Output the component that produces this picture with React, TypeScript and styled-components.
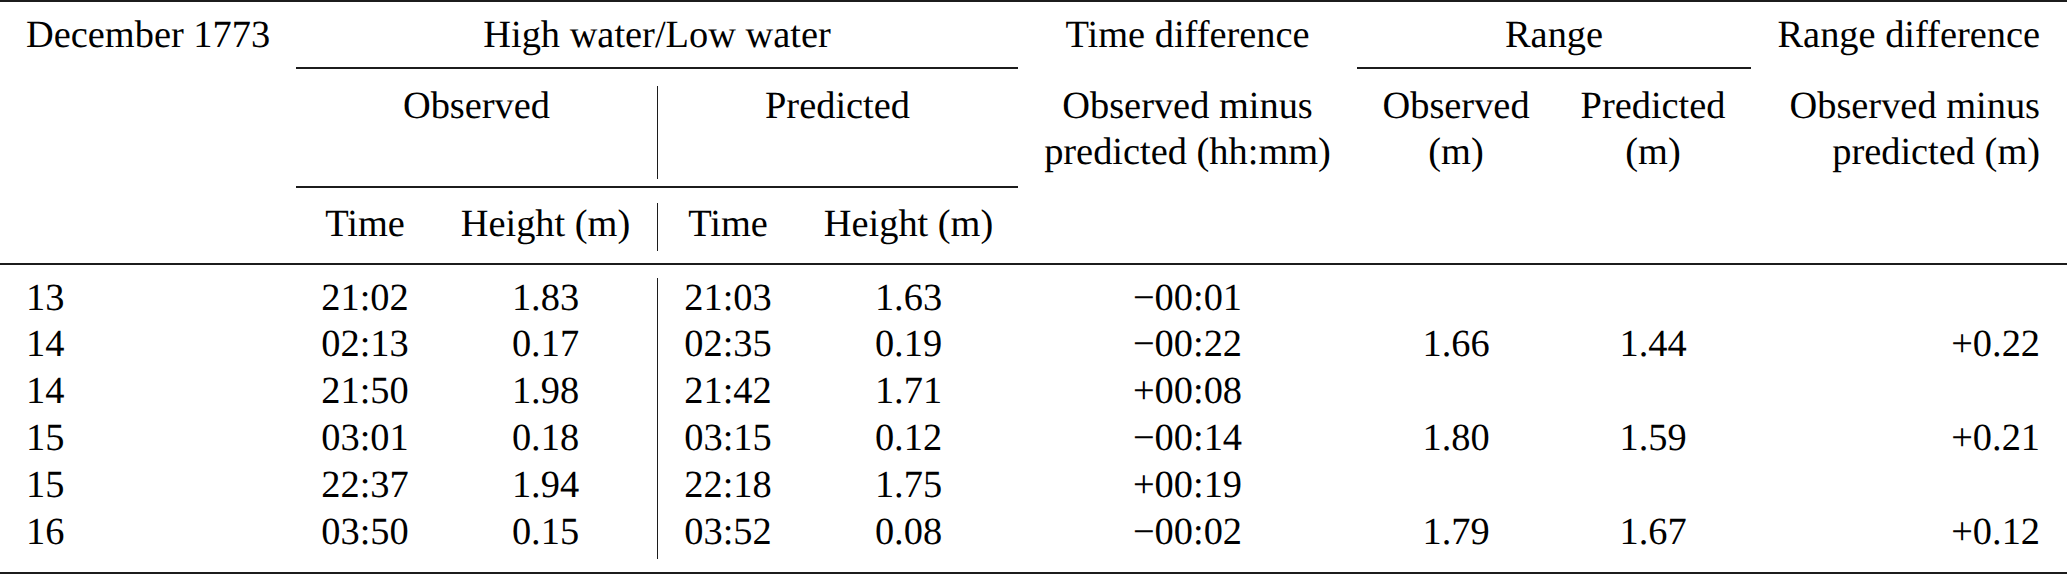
import React from 'react';
import styled, { createGlobalStyle } from 'styled-components';

const GlobalStyle = createGlobalStyle`
  html,
  body {
    margin: 0;
    padding: 0;
    background: #fff;
    color: #000;
    font-family: "Liberation Serif", serif;
  }
`;

const RULE = '#1c1c1c';

const columns = [296, 138, 223, 142, 219, 339, 198, 196, 316];

type Align = 'left' | 'center' | 'right';

const rows: string[][] = [
  ['13', '21:02', '1.83', '21:03', '1.63', '\u221200:01', '', '', ''],
  ['14', '02:13', '0.17', '02:35', '0.19', '\u221200:22', '1.66', '1.44', '+0.22'],
  ['14', '21:50', '1.98', '21:42', '1.71', '+00:08', '', '', ''],
  ['15', '03:01', '0.18', '03:15', '0.12', '\u221200:14', '1.80', '1.59', '+0.21'],
  ['15', '22:37', '1.94', '22:18', '1.75', '+00:19', '', '', ''],
  ['16', '03:50', '0.15', '03:52', '0.08', '\u221200:02', '1.79', '1.67', '+0.12'],
];

const bodyAlign: Align[] = [
  'left',
  'center',
  'center',
  'center',
  'center',
  'center',
  'center',
  'center',
  'right',
];

const App: React.FC = () => {
  return (
    <>
      <GlobalStyle />
      <Table>
        <colgroup>
          {columns.map((w, i) => (
            <Col key={i} $w={w} />
          ))}
        </colgroup>
        <thead>
          <HeadRowA>
            <Cell rowSpan={3} $align="left" $mid>
              December 1773
            </Cell>
            <Cell colSpan={4} $cmid>
              High water/Low water
            </Cell>
            <Cell>Time difference</Cell>
            <Cell colSpan={2} $cmid>
              Range
            </Cell>
            <Cell $align="right">Range difference</Cell>
          </HeadRowA>
          <HeadRowB>
            <Cell colSpan={2} $cmid>
              Observed
            </Cell>
            <Cell colSpan={2} $cmid $divTop={17} $divBottom={9}>
              Predicted
            </Cell>
            <Cell rowSpan={2} $mid>
              Observed minus
              <br />
              predicted (hh:mm)
            </Cell>
            <Cell rowSpan={2} $mid>
              Observed
              <br />
              (m)
            </Cell>
            <Cell rowSpan={2} $mid>
              Predicted
              <br />
              (m)
            </Cell>
            <Cell rowSpan={2} $align="right" $mid>
              Observed minus
              <br />
              predicted (m)
            </Cell>
          </HeadRowB>
          <HeadRowC>
            <Cell $mid>Time</Cell>
            <Cell $mid>Height (m)</Cell>
            <Cell $mid $divTop={15} $divBottom={14}>
              Time
            </Cell>
            <Cell $mid>Height (m)</Cell>
          </HeadRowC>
        </thead>
        <tbody>
          {rows.map((row, r) => (
            <BodyRow key={r}>
              {columns.map((_, c) => (
                <Cell
                  as="td"
                  key={c}
                  $align={bodyAlign[c]}
                  $divTop={c === 3 ? (r === 0 ? 13 : 0) : undefined}
                  $divBottom={c === 3 ? (r === rows.length - 1 ? 13 : 0) : undefined}
                >
                  {row[c]}
                </Cell>
              ))}
            </BodyRow>
          ))}
        </tbody>
      </Table>
    </>
  );
};

const Table = styled.table`
  width: 2067px;
  table-layout: fixed;
  border-collapse: separate;
  border-spacing: 0;
  border-top: 2px solid ${RULE};
  border-bottom: 2px solid ${RULE};
  font-family: "Liberation Serif", serif;
  font-size: 38.4px;
  line-height: 46.8px;
  font-weight: 400;
  color: #000;
  text-rendering: geometricPrecision;
`;

const Col = styled.col<{ $w: number }>`
  width: ${(p) => p.$w}px;
`;

const Cell = styled.th<{
  $align?: Align;
  $cmid?: boolean;
  $mid?: boolean;
  $divTop?: number;
  $divBottom?: number;
}>`
  box-sizing: border-box;
  padding: 0;
  padding-left: ${(p) => (p.$align === 'left' ? '26px' : '0')};
  padding-right: ${(p) => (p.$align === 'right' ? '27px' : '0')};
  font-family: "Liberation Serif", serif;
  text-align: ${(p) => p.$align ?? 'center'};
  vertical-align: top;
  font-weight: 400;
  white-space: nowrap;
  border-bottom: ${(p) => (p.$cmid || p.$mid ? `2px solid ${RULE}` : 'none')};
  ${(p) =>
    p.$divTop !== undefined &&
    `
    background-image: linear-gradient(${RULE}, ${RULE});
    background-repeat: no-repeat;
    background-origin: border-box;
    background-position: 0 ${p.$divTop}px;
    background-size: 1px calc(100% - ${p.$divTop + (p.$divBottom ?? 0)}px);
  `}
`;

const HeadRowA = styled.tr`
  & > th {
    height: 67px;
    padding-top: 9.6px;
  }
`;

const HeadRowB = styled.tr`
  & > th {
    height: 119px;
    padding-top: 13.6px;
  }
`;

const HeadRowC = styled.tr`
  & > th {
    height: 77px;
    padding-top: 12.6px;
  }
`;

const BodyRow = styled.tr`
  & > td {
    height: 46.8px;
  }
  &:first-child > td {
    height: 56.4px;
    padding-top: 9.6px;
  }
  &:last-child > td {
    height: 63.4px;
  }
`;

export default App;
